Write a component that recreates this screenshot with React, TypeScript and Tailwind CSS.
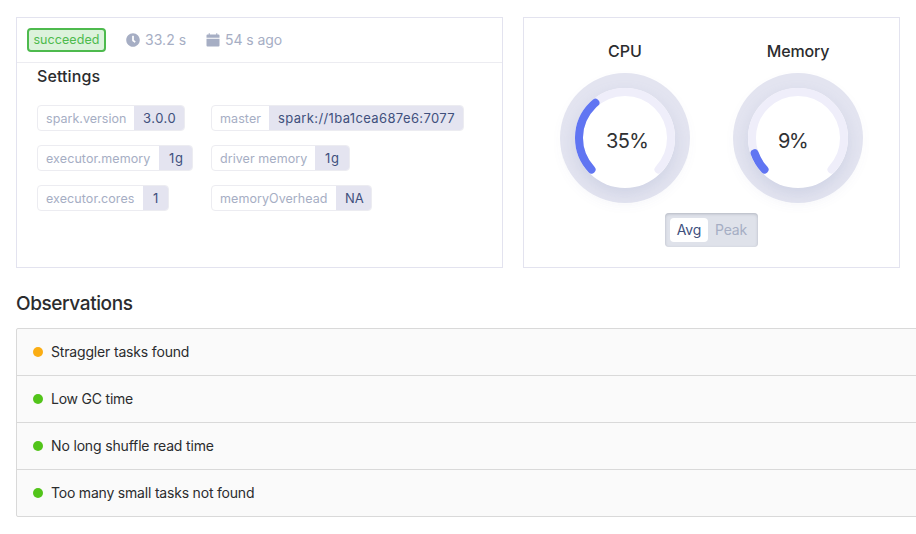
import React from "react";
import { FaClock } from "react-icons/fa";

type TagProps = { label: string; value: string; labelClass: string; valueClass: string };

const tagColumns: TagProps[][] = [
  [
    { label: "spark.version", value: "3.0.0", labelClass: "w-[97px] tracking-[0.03px]", valueClass: "w-[51px] tracking-[0.5px]" },
    { label: "executor.memory", value: "1g", labelClass: "w-[122px] tracking-[0.1px]", valueClass: "w-[34px] pl-[10px] tracking-[0.6px]" },
    { label: "executor.cores", value: "1", labelClass: "w-[106px] tracking-[0.08px]", valueClass: "w-[26px] pl-[10px]" },
  ],
  [
    { label: "master", value: "spark://1ba1cea687e6:7077", labelClass: "w-[58px] tracking-[0.1px]", valueClass: "w-[195px] tracking-[0.37px]" },
    { label: "driver memory", value: "1g", labelClass: "w-[104px] tracking-[0.06px]", valueClass: "w-[35px] pl-[10px] tracking-[0.6px]" },
    { label: "memoryOverhead", value: "NA", labelClass: "w-[125px] tracking-[0.07px]", valueClass: "w-[36px] tracking-[-0.1px]" },
  ],
];

function Tag({ label, value, labelClass, valueClass }: TagProps) {
  return (
    <div className="flex h-[26px] w-fit overflow-hidden whitespace-nowrap rounded-[4px] border border-[#ececf1] leading-[25px]">
      <span className={`-ml-px shrink-0 pl-[9px] text-[12.5px] text-[#a6aec4] ${labelClass}`}>{label}</span>
      <span className={`-mr-px shrink-0 bg-[#e4e4f0] pl-[9px] text-[13px] text-[#40507d] ${valueClass}`}>{value}</span>
    </div>
  );
}

function Gauge({ title, value, titleClass, valueClass }: { title: string; value: number; titleClass: string; valueClass: string }) {
  return (
    <div className="flex w-[130px] flex-col items-center">
      <h3 className={`h-[22px] text-[16px] font-medium leading-[22px] text-[#2b2c2e] ${titleClass}`}>{title}</h3>
      <div className="mt-[11px] flex h-[130px] w-[130px] items-center justify-center rounded-full bg-[#e3e4f0] shadow-[0_4px_12px_rgba(80,90,160,0.03)]">
        <div className="relative h-[100px] w-[100px] rounded-full bg-white shadow-[0_6px_15px_rgba(130,145,185,0.2)]">
          <svg viewBox="0 0 100 100" className="h-full w-full" fill="none" strokeWidth="8" strokeLinecap="round">
            <path d="M16.5 81.5A46 46 0 1 1 83.5 81.5" stroke="#efeefa" />
            <path d="M16.5 81.5A46 46 0 1 1 83.5 81.5" stroke="#6075f2" pathLength="100" strokeDasharray={`${value} 200`} />
          </svg>
          <span className={`absolute top-[39px] text-[20px] leading-[28px] text-[#303133] ${valueClass}`}>{value}%</span>
        </div>
      </div>
    </div>
  );
}

const observations = [
  { text: "Straggler tasks found", dot: "bg-[#faad14]", textClass: "tracking-[-0.17px]" },
  { text: "Low GC time", dot: "bg-[#52c41a]", textClass: "tracking-[-0.22px]" },
  { text: "No long shuffle read time", dot: "bg-[#52c41a]", textClass: "tracking-[-0.16px]" },
  { text: "Too many small tasks not found", dot: "bg-[#52c41a]", textClass: "tracking-[-0.2px]" },
];

export default function App() {
  return (
    <main className="h-[534px] w-[916px] overflow-hidden bg-white pl-4 pt-[17px] font-['Inter','Liberation_Sans',sans-serif] text-[#2b2c2e]">
      <div className="flex gap-5">
        <section className="h-[251px] w-[487px] border border-[#e3e3ef]">
          <header className="flex h-[45px] items-center border-b border-[#ececf1] pl-[10px] text-[14px] text-[#a6aec4]">
            <span className="flex h-6 w-[79px] items-center justify-center rounded-[4px] border-2 border-[#4dba4d] bg-[#dcf2dc] pt-px text-[12.5px] tracking-[0.07px] text-[#4dba4d]">succeeded</span>
            <FaClock className="ml-5 h-[14px] w-[14px]" />
            <span className="ml-[5px] w-[61px] pb-px tracking-[0.05px]">33.2 s</span>
            <svg viewBox="0 0 14 14" className="h-[14px] w-[14px]" fill="currentColor">
              <path d="M.5 4.7V2.5Q.5 1.5 1.5 1.5H2.7V.3H3.8V1.5H10.2V.3H11.3V1.5h1.2q1 0 1 1V4.7ZM.5 5.7h13v6.7q0 1-1 1h-11q-1 0-1-1Z" />
            </svg>
            <span className="ml-[5px] pb-px tracking-[-0.08px]">54 s ago</span>
          </header>
          <div className="pl-5">
            <h2 className="h-[27px] text-[16px] font-medium leading-[27px] tracking-[0.1px]">Settings</h2>
            <div className="mt-[15px] grid grid-cols-[174px_auto]">
              {tagColumns.map((items, i) => (
                <div key={i} className="flex flex-col gap-[14px]">
                  {items.map((t) => <Tag key={t.label} {...t} />)}
                </div>
              ))}
            </div>
          </div>
        </section>
        <section className="flex h-[251px] w-[377px] flex-col items-center border border-[#e3e3ef] pt-[22px]">
          <div className="flex gap-[43px]">
            <Gauge title="CPU" value={35} titleClass="" valueClass="left-[31px] tracking-[-0.7px]" />
            <Gauge title="Memory" value={9} titleClass="tracking-[-0.15px]" valueClass="left-[30px] tracking-[-1.3px]" />
          </div>
          <div className="mt-[10px] flex h-[34px] w-[93px] items-center rounded-[4px] bg-[#dfe2ea] pl-[5px] text-[14px] shadow-[inset_0_1px_3px_rgba(70,75,95,0.28)]">
            <span className="flex h-6 w-[38px] items-center justify-center rounded-[4px] bg-white pb-[2px] tracking-[-0.2px] text-[#40507d]">Avg</span>
            <span className="ml-[7px] pb-[2px] tracking-[-0.2px] text-[#a6aec4]">Peak</span>
          </div>
        </section>
      </div>
      <h2 className="mt-[21px] h-7 pt-px text-[19px] font-medium leading-7 tracking-[-0.4px]">Observations</h2>
      <ul className="mt-[11px] w-[920px] rounded-[2px] border border-[#d9d9d9] bg-[#fafafa]">
        {observations.map((o) => (
          <li key={o.text} className="flex h-[47px] items-center border-b border-[#d9d9d9] pl-4 text-[14px] last:h-[46px] last:border-b-0">
            <span className={`h-[10px] w-[10px] rounded-full ${o.dot}`} />
            <span className={`ml-2 pb-px ${o.textClass}`}>{o.text}</span>
          </li>
        ))}
      </ul>
    </main>
  );
}
